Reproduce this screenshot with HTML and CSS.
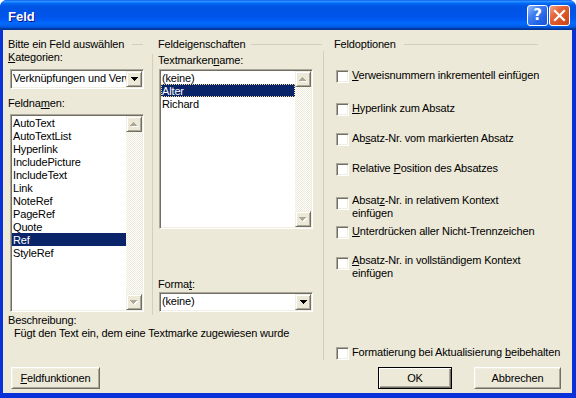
FILE: index.html
```html
<!DOCTYPE html>
<html lang="de">
<head>
    <meta charset="UTF-8">
    <title>Feld</title>
    <link rel="stylesheet" href="styles.css">
</head>
<body>

    <div class="window">
        <div class="titlebar">
            <span class="title">Feld</span>
            <div class="caption-buttons">
                <span class="cap-btn help">?</span>
                <span class="cap-btn close">
                    <svg width="21" height="21" viewBox="0 0 21 21">
                        <path d="M6 6L15 15M15 6L6 15" stroke="#fff" stroke-width="2.2" stroke-linecap="square"/>
                    </svg>
                </span>
            </div>
        </div>

        <div class="client">
            <!-- Linke Spalte -->
            <section class="col col-left">
                <div class="group-title"><span>Bitte ein Feld auswählen</span><i class="rule"></i></div>
                <div class="label"><u>K</u>ategorien:</div>
                <div class="combo combo-cat">
                    <span class="combo-text">Verknüpfungen und Verweise</span>
                    <span class="drop-btn">
                        <svg width="7" height="4" viewBox="0 0 7 4"><path d="M0 0h7v1h-1v1h-1v1h-1v1h-1v-1h-1v-1h-1v-1h-1z" fill="#000"/></svg>
                    </span>
                </div>
                <div class="label label-names">Feldna<u>m</u>en:</div>
                <div class="listbox list-names">
                    <ul class="items">
                        <li>AutoText</li>
                        <li>AutoTextList</li>
                        <li>Hyperlink</li>
                        <li>IncludePicture</li>
                        <li>IncludeText</li>
                        <li>Link</li>
                        <li>NoteRef</li>
                        <li>PageRef</li>
                        <li>Quote</li>
                        <li class="selected">Ref</li>
                        <li>StyleRef</li>
                    </ul>
                    <div class="vscroll">
                        <span class="sb-btn">
                            <svg width="8" height="5" viewBox="0 0 8 5"><path d="M4 1h1v1h1v1h1v1h1v1h-6v-1h1v-1h1v-1h1z" fill="#fff"/><path d="M3 0h1v1h1v1h1v1h1v1h-7v-1h1v-1h1v-1h1z" fill="#aca899"/></svg>
                        </span>
                        <span class="sb-track"></span>
                        <span class="sb-btn">
                            <svg width="8" height="5" viewBox="0 0 8 5"><path d="M1 1h7v1h-1v1h-1v1h-1v1h-1v-1h-1v-1h-1v-1h-1z" fill="#fff"/><path d="M0 0h7v1h-1v1h-1v1h-1v1h-1v-1h-1v-1h-1v-1h-1z" fill="#aca899"/></svg>
                        </span>
                    </div>
                </div>
            </section>

            <!-- Mittlere Spalte -->
            <section class="col col-mid">
                <div class="group-title"><span>Feldeigenschaften</span><i class="rule"></i></div>
                <div class="group-body">
                    <div class="label label-marks">Textmarken<u>n</u>ame:</div>
                    <div class="listbox list-marks">
                        <ul class="items">
                            <li>(keine)</li>
                            <li class="selected focused">Alter</li>
                            <li>Richard</li>
                        </ul>
                        <div class="vscroll">
                            <span class="sb-btn">
                                <svg width="8" height="5" viewBox="0 0 8 5"><path d="M4 1h1v1h1v1h1v1h1v1h-6v-1h1v-1h1v-1h1z" fill="#fff"/><path d="M3 0h1v1h1v1h1v1h1v1h-7v-1h1v-1h1v-1h1z" fill="#aca899"/></svg>
                            </span>
                            <span class="sb-track"></span>
                            <span class="sb-btn">
                                <svg width="8" height="5" viewBox="0 0 8 5"><path d="M1 1h7v1h-1v1h-1v1h-1v1h-1v-1h-1v-1h-1v-1h-1z" fill="#fff"/><path d="M0 0h7v1h-1v1h-1v1h-1v1h-1v-1h-1v-1h-1v-1h-1z" fill="#aca899"/></svg>
                            </span>
                        </div>
                    </div>
                    <div class="label label-format">Forma<u>t</u>:</div>
                    <div class="combo combo-format">
                        <span class="combo-text">(keine)</span>
                        <span class="drop-btn">
                            <svg width="7" height="4" viewBox="0 0 7 4"><path d="M0 0h7v1h-1v1h-1v1h-1v1h-1v-1h-1v-1h-1v-1h-1z" fill="#000"/></svg>
                        </span>
                    </div>
                </div>
            </section>

            <!-- Rechte Spalte -->
            <section class="col col-right">
                <div class="group-title"><span>Feldoptionen</span><i class="rule"></i></div>
                <div class="options">
                    <label class="option"><span class="check"></span><span><u>V</u>erweisnummern inkrementell einfügen</span></label>
                    <label class="option"><span class="check"></span><span><u>H</u>yperlink zum Absatz</span></label>
                    <label class="option"><span class="check"></span><span>Ab<u>s</u>atz-Nr. vom markierten Absatz</span></label>
                    <label class="option"><span class="check"></span><span>Relative <u>P</u>osition des Absatzes</span></label>
                    <label class="option two-line"><span class="check"></span><span>Absat<u>z</u>-Nr. in relativem Kontext<br>einfügen</span></label>
                    <label class="option"><span class="check"></span><span><u>U</u>nterdrücken aller Nicht-Trennzeichen</span></label>
                    <label class="option two-line"><span class="check"></span><span><u>A</u>bsatz-Nr. in vollständigem Kontext<br>einfügen</span></label>
                    <label class="option"><span class="check"></span><span>Formatierung bei Aktualisierung <u>b</u>eibehalten</span></label>
                </div>
            </section>

            <div class="description">
                <div>Beschreibung:</div>
                <div class="desc-text">Fügt den Text ein, dem eine Textmarke zugewiesen wurde</div>
            </div>

            <div class="button-row">
                <span class="btn btn-codes"><u>F</u>eldfunktionen</span>
                <span class="btn btn-ok default">OK</span>
                <span class="btn btn-cancel">Abbrechen</span>
            </div>
        </div>
    </div>

</body>
</html>
```

FILE: styles.css
```css
/* Grundeinstellungen */
* {
    margin: 0;
    padding: 0;
    box-sizing: border-box;
}

body {
    width: 576px;
    height: 398px;
    overflow: hidden;
    background-color: #fff;
    font-family: 'Liberation Sans', Arial, sans-serif;
    font-size: 11px;
    line-height: 13px;
    letter-spacing: -0.15px;
    color: #000;
}

u {
    text-decoration-thickness: 1px;
    text-underline-offset: 1px;
}

/* Fensterrahmen */
.window {
    width: 576px;
    height: 398px;
    display: flex;
    flex-direction: column;
    background-color: #0831d9;
    border-radius: 7px 7px 0 0;
    overflow: hidden;
}

.titlebar {
    height: 30px;
    flex: none;
    display: flex;
    align-items: flex-start;
    padding: 0 6px 0 8px;
    background: linear-gradient(to bottom, #0058ee 0%, #3593ff 4%, #288eff 6%, #127dff 8%, #036ffc 10%, #0262ee 14%, #0057e5 20%, #0054e3 24%, #0055eb 56%, #005bf5 66%, #026afe 76%, #0062ef 86%, #0052d6 92%, #0040ab 94%, #003092 100%);
}

.title {
    margin-top: 10px;
    font-size: 13px;
    font-weight: bold;
    letter-spacing: 0;
    color: #fff;
    text-shadow: 1px 1px #0f1089;
}

.caption-buttons {
    margin-left: auto;
    margin-top: 5px;
    display: flex;
    gap: 1px;
}

.cap-btn {
    width: 21px;
    height: 21px;
    border: 1px solid #fff;
    border-radius: 3px;
    display: flex;
    align-items: center;
    justify-content: center;
    overflow: hidden;
}

.cap-btn svg {
    flex: none;
}

.help {
    background: linear-gradient(135deg, #9cbcf9 0%, #3f7ff0 35%, #2264e6 70%, #1a54d6 100%);
    color: #fff;
    font-family: 'DejaVu Sans', sans-serif;
    font-size: 15px;
    font-weight: bold;
    letter-spacing: 0;
}

.close {
    background: linear-gradient(135deg, #f3a684 0%, #e4653a 35%, #d9511f 70%, #c3421a 100%);
}

/* Dialogflaeche */
.client {
    flex: 1;
    margin: 0 4px 5px 3px;
    background-color: #ece9d8;
    display: grid;
    grid-template-columns: 149px 171px 1fr;
    grid-template-rows: 284px 46px 1fr;
}

.group-title {
    height: 13px;
    display: flex;
    align-items: center;
    white-space: nowrap;
}

.group-title .rule {
    flex: 1;
    margin-left: 8px;
    border-top: 1px solid #d0d0bf;
}

.col {
    padding-top: 8px;
}

.col-left {
    grid-column: 1;
    grid-row: 1;
    padding-left: 5px;
    padding-right: 9px;
}

.col-mid {
    grid-column: 2;
    grid-row: 1;
}

.col-mid .group-title {
    padding-left: 6px;
    padding-right: 1px;
}

.col-mid .rule {
    margin-left: 6px;
}

.group-body {
    height: 261px;
    border-left: 1px solid #d0d0bf;
    padding-left: 5px;
}

.col-right {
    grid-column: 3;
    grid-row: 1 / 3;
}

.col-right .group-title {
    padding-left: 11px;
    padding-right: 34px;
}

.label {
    white-space: nowrap;
}

.label-names {
    margin-top: 8px;
}

.label-marks {
    margin-top: 3px;
}

.label-format {
    margin-top: 49px;
}

/* Eingabefelder mit eingesenktem Rand */
.combo,
.listbox {
    display: flex;
    background-color: #fff;
    border: 1px solid;
    border-color: #aca899 #fff #fff #aca899;
    box-shadow: inset 1px 1px #716f64, inset -1px -1px #f1efe2;
    padding: 1px;
}

.combo {
    height: 20px;
}

.combo-cat {
    width: 134px;
    margin: 5px 0 0 2px;
}

.combo-format {
    width: 154px;
    margin: 1px 0 0 1px;
}

.combo-text {
    flex: 1;
    overflow: hidden;
    white-space: nowrap;
    padding: 1px 0 0 1px;
}

.drop-btn,
.sb-btn {
    width: 16px;
    height: 16px;
    flex: none;
    display: flex;
    align-items: center;
    justify-content: center;
    background-color: #ece9d8;
    border: 1px solid;
    border-color: #f1efe2 #716f64 #716f64 #f1efe2;
    box-shadow: inset 1px 1px #fff, inset -1px -1px #aca899;
}

.list-names {
    width: 134px;
    height: 198px;
    margin: 4px 0 0 2px;
}

.list-marks {
    width: 154px;
    height: 160px;
    margin: 2px 0 0 1px;
}

.items {
    flex: 1;
    list-style: none;
    overflow: hidden;
}

.items li {
    height: 13px;
    line-height: 14px;
    padding-left: 1px;
    white-space: nowrap;
}

.items li.selected {
    background-color: #0a246a;
    color: #fff;
}

.items li.focused {
    outline: 1px dotted #f5db95;
    outline-offset: -1px;
}

.vscroll {
    width: 16px;
    display: flex;
    flex-direction: column;
}

.sb-track {
    flex: 1;
    background: repeating-conic-gradient(#fff 0 25%, #ece9d8 0 50%) 0 0 / 2px 2px;
}

/* Feldoptionen */
.options {
    height: 309px;
    border-left: 1px solid #d0d0bf;
    padding: 18px 0 0 12px;
    display: grid;
    grid-template-rows: 33px 30px 30px 32px 31px 29px 92px 14px;
}

.option {
    display: flex;
    align-items: flex-start;
    gap: 3px;
    white-space: nowrap;
}

.check {
    width: 13px;
    height: 13px;
    flex: none;
    margin-top: 1px;
    background-color: #fff;
    border: 1px solid;
    border-color: #aca899 #fff #fff #aca899;
    box-shadow: inset 1px 1px #716f64, inset -1px -1px #f1efe2;
}

.option.two-line .check {
    margin-top: 3px;
}

/* Beschreibung */
.description {
    grid-column: 1 / 3;
    grid-row: 2;
    padding-left: 5px;
    white-space: nowrap;
}

.desc-text {
    padding-left: 6px;
}

/* Schaltflaechen */
.button-row {
    grid-column: 1 / -1;
    grid-row: 3;
    display: flex;
    align-items: flex-start;
    padding: 7px 11px 0 8px;
}

.btn {
    height: 22px;
    display: flex;
    align-items: center;
    justify-content: center;
    background-color: #ece9d8;
    border: 1px solid;
    border-color: #fff #716f64 #716f64 #fff;
    box-shadow: inset 1px 1px #f1efe2, inset -1px -1px #aca899;
    white-space: nowrap;
}

.btn.default {
    border-color: #000;
    box-shadow: inset 1px 1px #fff, inset -1px -1px #716f64, inset -2px -2px #aca899;
}

.btn-codes {
    width: 89px;
}

.btn-ok {
    width: 74px;
    margin-left: auto;
}

.btn-cancel {
    width: 87px;
    margin-left: 22px;
}
```
